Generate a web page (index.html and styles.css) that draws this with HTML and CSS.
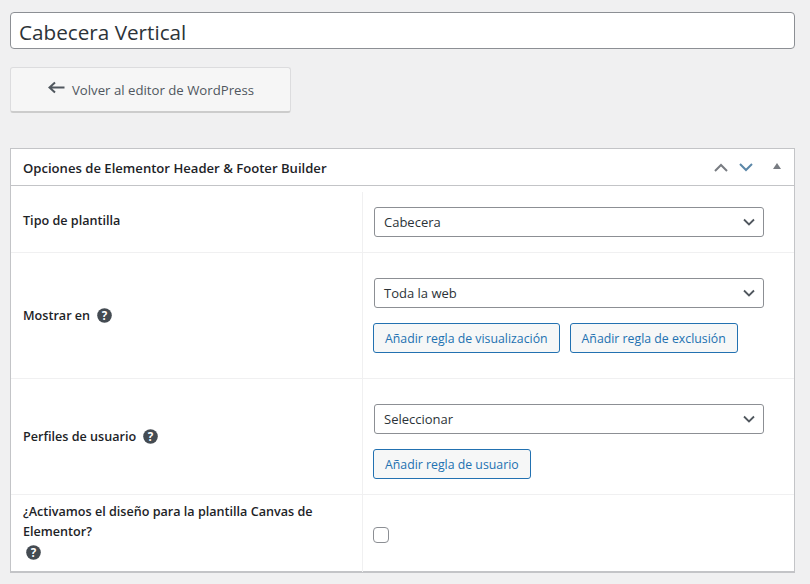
FILE: index.html
```html
<!DOCTYPE html>
<html lang="es">
<head>
<meta charset="utf-8">
<title>Cabecera Vertical</title>
<link rel="stylesheet" href="styles.css">
</head>
<body>
<main class="page">
  <input class="title-input" type="text" value="Cabecera Vertical">
  <a class="back-btn" href="#">
    <svg class="back-arrow" width="18" height="14" viewBox="0 0 18 14"><path d="M17.5 6.5H3M8 1.5 2.5 6.5 8 11.5" fill="none" stroke="#50575e" stroke-width="2"/></svg>
    <span>Volver al editor de WordPress</span>
  </a>
  <section class="panel">
    <header class="panel-head">
      <h2 class="panel-title">Opciones de Elementor Header &amp; Footer Builder</h2>
      <div class="panel-actions">
        <svg class="act-up" width="14" height="9" viewBox="0 0 14 9"><path d="M1 8 7 2l6 6" fill="none" stroke="#787c82" stroke-width="2"/></svg>
        <svg class="act-down" width="14" height="9" viewBox="0 0 14 9"><path d="M1 1l6 6 6-6" fill="none" stroke="#5b87a8" stroke-width="2"/></svg>
        <svg class="act-toggle" width="8" height="6" viewBox="0 0 8 6"><path d="M4 0l4 6H0z" fill="#787c82"/></svg>
      </div>
    </header>
    <div class="rows">
      <div class="row row-type">
        <div class="label-cell"><span class="label">Tipo de plantilla</span></div>
        <div class="field-cell">
          <div class="select"><span>Cabecera</span><svg width="12" height="8" viewBox="0 0 12 8"><path d="M1 1.5l5 5 5-5" fill="none" stroke="#50575e" stroke-width="1.8"/></svg></div>
        </div>
      </div>
      <div class="row row-show">
        <div class="label-cell"><span class="label">Mostrar en</span>
          <svg class="help" width="15" height="15" viewBox="0 0 15 15"><circle cx="7.5" cy="7.5" r="7.3" fill="#444b52"/><text x="7.5" y="11.6" class="help-mark">?</text></svg>
        </div>
        <div class="field-cell">
          <div class="select"><span>Toda la web</span><svg width="12" height="8" viewBox="0 0 12 8"><path d="M1 1.5l5 5 5-5" fill="none" stroke="#50575e" stroke-width="1.8"/></svg></div>
          <div class="btn-row">
            <a class="btn" href="#">Añadir regla de visualización</a>
            <a class="btn" href="#">Añadir regla de exclusión</a>
          </div>
        </div>
      </div>
      <div class="row row-users">
        <div class="label-cell"><span class="label">Perfiles de usuario</span>
          <svg class="help" width="15" height="15" viewBox="0 0 15 15"><circle cx="7.5" cy="7.5" r="7.3" fill="#444b52"/><text x="7.5" y="11.6" class="help-mark">?</text></svg>
        </div>
        <div class="field-cell">
          <div class="select"><span>Seleccionar</span><svg width="12" height="8" viewBox="0 0 12 8"><path d="M1 1.5l5 5 5-5" fill="none" stroke="#50575e" stroke-width="1.8"/></svg></div>
          <div class="btn-row">
            <a class="btn" href="#">Añadir regla de usuario</a>
          </div>
        </div>
      </div>
      <div class="row row-canvas">
        <div class="label-cell label-stack"><span class="label">¿Activamos el diseño para la plantilla Canvas de Elementor?</span>
          <svg class="help help-below" width="15" height="15" viewBox="0 0 15 15"><circle cx="7.5" cy="7.5" r="7.3" fill="#444b52"/><text x="7.5" y="11.6" class="help-mark">?</text></svg>
        </div>
        <div class="field-cell"><input class="check" type="checkbox"></div>
      </div>
    </div>
  </section>
</main>
</body>
</html>
```
FILE: styles.css
```css
* { box-sizing: border-box; }
html, body { margin: 0; padding: 0; }
body {
  width: 810px;
  height: 584px;
  overflow: hidden;
  background: #f0f0f1;
  font-family: "Open Sans", "Noto Sans", sans-serif;
  font-size: 13px;
  color: #1d2327;
}
.page {
  display: flex;
  flex-direction: column;
  align-items: flex-start;
  padding: 12px 15px 0 10px;
}
.title-input {
  display: block;
  width: 100%;
  height: 37px;
  padding: 2px 8px 0;
  border: 1px solid #8c8f94;
  border-radius: 4px;
  background: #fff;
  color: #2c3338;
  font: 20.7px "Open Sans", sans-serif;
  outline: 0;
}
.back-btn {
  display: flex;
  align-items: center;
  justify-content: center;
  gap: 7px;
  width: 281px;
  height: 46px;
  margin-top: 18px;
  padding-top: 1px;
  border: 1px solid #dcdcde;
  border-bottom: 2px solid #ccc;
  border-radius: 3px;
  background: #f6f6f6;
  color: #50575e;
  font-size: 13.2px;
  text-decoration: none;
}
.back-arrow { margin-top: -5px; }
.panel {
  width: 100%;
  height: 425px;
  margin-top: 35px;
  border: 1px solid #c3c4c7;
  border-bottom-width: 2px;
  background: #fff;
}
.panel-head {
  display: flex;
  align-items: center;
  justify-content: space-between;
  height: 37px;
  padding: 1px 13px 0 12px;
  border-bottom: 1px solid #c3c4c7;
}
.panel-title {
  margin: 0;
  font-size: 13.1px;
  font-weight: 600;
  color: #1d2327;
}
.panel-actions {
  display: flex;
  align-items: center;
  gap: 11px;
}
.act-toggle { margin-left: 9px; margin-top: -3px; }
.row {
  display: grid;
  grid-template-columns: 351px 1fr;
  border-bottom: 1px solid #f0f0f1;
}
.row:last-child { border-bottom: 0; }
.row-type { height: 67px; padding-top: 6px; }
.row-type .label { margin-top: -2px; }
.row-show { height: 126px; }
.row-users { height: 116px; }
.row-canvas { height: 77px; }
.label-cell {
  display: flex;
  align-items: center;
  gap: 7px;
  padding-left: 12px;
}
.label-stack {
  flex-direction: column;
  align-items: flex-start;
  justify-content: flex-start;
  gap: 3px;
  padding-top: 7px;
  padding-right: 20px;
}
.label {
  font-size: 12.6px;
  font-weight: 600;
  line-height: 20px;
  color: #1d2327;
}
.help { flex: none; margin-top: -1px; }
.help-below { margin-top: 0; margin-left: 3px; }
.help-mark {
  fill: #fff;
  font: 700 11.5px "Open Sans", sans-serif;
  text-anchor: middle;
}
.field-cell {
  display: flex;
  flex-direction: column;
  align-items: flex-start;
  justify-content: center;
  padding-left: 10px;
  border-left: 1px solid #f0f0f1;
}
.row-show .field-cell { justify-content: flex-start; padding-top: 25px; }
.row-users .field-cell { justify-content: flex-start; padding-top: 25px; }
.row-type .field-cell { justify-content: flex-start; padding-top: 15px; }
.select {
  display: flex;
  align-items: center;
  justify-content: space-between;
  width: 390px;
  height: 30px;
  margin-left: 1px;
  padding: 0 8px 0 9px;
  border: 1px solid #8c8f94;
  border-radius: 3px;
  background: #fff;
  color: #2c3338;
  font-size: 13px;
}
.btn-row {
  display: flex;
  gap: 10px;
  margin-top: 15px;
}
.btn {
  display: flex;
  align-items: center;
  height: 30px;
  padding: 0 11px;
  border: 1px solid #2271b1;
  border-radius: 3px;
  background: #f6f7f7;
  color: #2271b1;
  font-size: 12.3px;
  text-decoration: none;
}
.check {
  appearance: none;
  display: block;
  width: 16px;
  height: 16px;
  margin: 2px 0 0;
  border: 1px solid #8c8f94;
  border-radius: 4px;
  background: #fff;
}
```
